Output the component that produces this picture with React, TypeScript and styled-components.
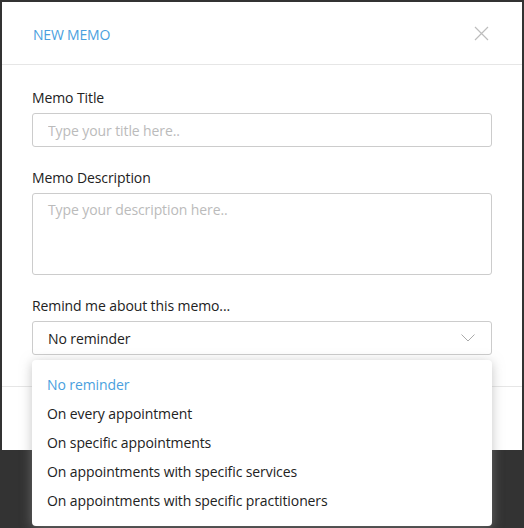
import styled, { createGlobalStyle } from "styled-components";

const GlobalStyle = createGlobalStyle`
  html, body {
    margin: 0;
    padding: 0;
    background: #333333;
  }
  body {
    font-family: "Open Sans", "Noto Sans", sans-serif;
    letter-spacing: -0.1px;
    -webkit-font-smoothing: antialiased;
  }
  * {
    box-sizing: border-box;
  }
`;

const Backdrop = styled.div`
  width: 524px;
  height: 528px;
  padding: 2px 0 0 2px;
  background: #333333;
  overflow: hidden;
`;

const Modal = styled.div`
  position: relative;
  width: 520px;
  background: #ffffff;
`;

const ModalHeader = styled.div`
  height: 63px;
  padding: 0 31px 0 31px;
  display: flex;
  align-items: center;
  justify-content: space-between;
  border-bottom: 1px solid #e6e6e6;
`;

const ModalTitle = styled.h2`
  margin: 0;
  padding-top: 2px;
  font-size: 14px;
  font-weight: 400;
  color: #4a9fde;
  letter-spacing: -0.2px;
`;

const CloseButton = styled.button`
  width: 16px;
  height: 16px;
  padding: 0;
  margin-right: 2px;
  margin-top: 1px;
  border: none;
  background: none;
  display: flex;
  align-items: center;
  justify-content: center;
  cursor: pointer;
`;

const ModalBody = styled.div`
  padding: 23px 30px 31px;
  display: flex;
  flex-direction: column;
`;

const Field = styled.div<{ $last?: boolean }>`
  display: flex;
  flex-direction: column;
  margin-bottom: ${(p) => (p.$last ? "0" : "21px")};
`;

const Label = styled.label`
  font-size: 14px;
  line-height: 20px;
  color: #222222;
  margin-bottom: 5px;
`;

const TextInput = styled.input`
  display: block;
  height: 34px;
  width: 100%;
  padding: 0 15px;
  border: 1px solid #cccccc;
  border-radius: 3px;
  font-family: inherit;
  font-size: 14px;
  letter-spacing: -0.1px;
  color: #222222;
  outline: none;
  &::placeholder {
    color: #bbbbbb;
  }
`;

const TextArea = styled.textarea`
  display: block;
  height: 82px;
  width: 100%;
  padding: 6px 15px;
  border: 1px solid #cccccc;
  border-radius: 3px;
  font-family: inherit;
  font-size: 14px;
  line-height: 20px;
  letter-spacing: -0.1px;
  color: #222222;
  resize: none;
  outline: none;
  &::placeholder {
    color: #bbbbbb;
  }
`;

const SelectBox = styled.div`
  height: 34px;
  width: 100%;
  padding: 0 16px 0 15px;
  border: 1px solid #cccccc;
  border-radius: 3px;
  display: flex;
  align-items: center;
  justify-content: space-between;
  font-size: 14px;
  color: #222222;
`;

const ModalFooter = styled.div`
  height: 64px;
  border-top: 1px solid #e6e6e6;
`;

const Dropdown = styled.ul`
  position: absolute;
  top: 358px;
  left: 30px;
  width: 460px;
  margin: 0;
  padding: 10px 0 11px;
  list-style: none;
  background: #ffffff;
  border-radius: 4px;
  box-shadow: 0 2px 12px rgba(150, 150, 150, 0.55);
`;

const Option = styled.li<{ $selected?: boolean }>`
  height: 29px;
  line-height: 29px;
  padding: 0 15px;
  font-size: 14px;
  color: ${(p) => (p.$selected ? "#4a9fde" : "#222222")};
  cursor: pointer;
`;

const options = [
  "No reminder",
  "On every appointment",
  "On specific appointments",
  "On appointments with specific services",
  "On appointments with specific practitioners",
];

const CloseIcon = () => (
  <svg width="15" height="15" viewBox="0 0 15 15">
    <path d="M1 1L14 14M14 1L1 14" stroke="#bdbdbd" strokeWidth="1.2" fill="none" />
  </svg>
);

const ChevronIcon = () => (
  <svg width="14" height="8" viewBox="0 0 14 8">
    <path d="M0.5 0.5L7 7L13.5 0.5" stroke="#aaaaaa" strokeWidth="1" fill="none" />
  </svg>
);

export default function App() {
  return (
    <>
      <GlobalStyle />
      <Backdrop>
        <Modal>
          <ModalHeader>
            <ModalTitle>NEW MEMO</ModalTitle>
            <CloseButton aria-label="Close">
              <CloseIcon />
            </CloseButton>
          </ModalHeader>
          <ModalBody>
            <Field>
              <Label>Memo Title</Label>
              <TextInput placeholder="Type your title here.." />
            </Field>
            <Field>
              <Label>Memo Description</Label>
              <TextArea placeholder="Type your description here.." />
            </Field>
            <Field $last>
              <Label>Remind me about this memo...</Label>
              <SelectBox>
                <span>No reminder</span>
                <ChevronIcon />
              </SelectBox>
            </Field>
          </ModalBody>
          <ModalFooter />
          <Dropdown>
            {options.map((o, i) => (
              <Option key={o} $selected={i === 0}>
                {o}
              </Option>
            ))}
          </Dropdown>
        </Modal>
      </Backdrop>
    </>
  );
}
